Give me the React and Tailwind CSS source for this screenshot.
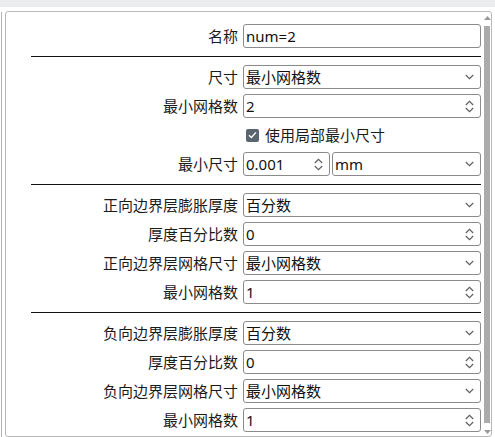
import React from 'react';

const FONT = { fontFamily: '"Segoe UI", "Noto Sans", "Noto Sans CJK SC", sans-serif' };

function Chevron() {
    return (
        <svg width="9" height="6" viewBox="0 0 9 6" className="shrink-0">
            <path d="M0.8 1 L4.5 4.6 L8.2 1" fill="none" stroke="#5f5f5f" strokeWidth="1.2" />
        </svg>
    );
}

function Spin() {
    return (
        <svg width="9" height="13" viewBox="0 0 9 13" className="shrink-0">
            <path d="M0.8 5 L4.5 1.4 L8.2 5" fill="none" stroke="#5f5f5f" strokeWidth="1.2" />
            <path d="M0.8 8 L4.5 11.6 L8.2 8" fill="none" stroke="#5f5f5f" strokeWidth="1.2" />
        </svg>
    );
}

function Field({ value, kind, className = 'flex-1' }) {
    return (
        <div
            className={`${className} h-[24px] border border-[#8b8b8b] rounded-[3px] bg-white flex items-center pl-[2px] pr-[6px] text-[15px] text-[#111] leading-none`}
        >
            <span className="flex-1 whitespace-nowrap">{value}</span>
            {kind === 'select' && <Chevron />}
            {kind === 'spin' && <Spin />}
        </div>
    );
}

function Row({ label, children }) {
    return (
        <div className="flex items-center h-[24px]">
            <div className="w-[237px] shrink-0 pr-[5px] text-right text-[15px] text-[#1b1b1b] leading-none whitespace-nowrap">
                {label}
            </div>
            <div className="flex-1 flex gap-[2px]">{children}</div>
        </div>
    );
}

function Separator() {
    return <div className="ml-[25px] h-px bg-[#111] my-[8px]" />;
}

function Section({ children }) {
    return <div className="flex flex-col gap-[5px]">{children}</div>;
}

export default function App() {
    return (
        <div className="w-[495px] h-[437px] bg-white overflow-hidden" style={FONT}>
            <div className="h-[7px] bg-[#ebecee]" />
            <div className="flex h-[430px] pt-[4px]">
                <div className="w-px ml-px mt-px bg-[#b3b3b3]" />
                <div className="ml-[3px] w-[487px] border border-[#b8b8b8] rounded-[3px] flex overflow-hidden">
                    {/* form content */}
                    <div className="flex-1 pt-[12px] pr-[3px]">
                        <Section>
                            <Row label="名称">
                                <Field value="num=2" />
                            </Row>
                        </Section>
                        <Separator />
                        <Section>
                            <Row label="尺寸">
                                <Field value="最小网格数" kind="select" />
                            </Row>
                            <Row label="最小网格数">
                                <Field value="2" kind="spin" />
                            </Row>
                            <div className="flex items-center h-[24px] pl-[240px] gap-[6px]">
                                <div className="w-[13px] h-[13px] rounded-[2px] bg-[#5b6570] flex items-center justify-center">
                                    <svg width="9" height="8" viewBox="0 0 9 8">
                                        <path d="M1 4.2 L3.4 6.4 L8 1.4" fill="none" stroke="#fff" strokeWidth="1.4" />
                                    </svg>
                                </div>
                                <span className="text-[15px] text-[#1b1b1b] leading-none">使用局部最小尺寸</span>
                            </div>
                            <Row label="最小尺寸">
                                <Field value="0.001" kind="spin" className="w-[87px] shrink-0" />
                                <Field value="mm" kind="select" />
                            </Row>
                        </Section>
                        <Separator />
                        <Section>
                            <Row label="正向边界层膨胀厚度">
                                <Field value="百分数" kind="select" />
                            </Row>
                            <Row label="厚度百分比数">
                                <Field value="0" kind="spin" />
                            </Row>
                            <Row label="正向边界层网格尺寸">
                                <Field value="最小网格数" kind="select" />
                            </Row>
                            <Row label="最小网格数">
                                <Field value="1" kind="spin" />
                            </Row>
                        </Section>
                        <Separator />
                        <Section>
                            <Row label="负向边界层膨胀厚度">
                                <Field value="百分数" kind="select" />
                            </Row>
                            <Row label="厚度百分比数">
                                <Field value="0" kind="spin" />
                            </Row>
                            <Row label="负向边界层网格尺寸">
                                <Field value="最小网格数" kind="select" />
                            </Row>
                            <Row label="最小网格数">
                                <Field value="1" kind="spin" />
                            </Row>
                        </Section>
                    </div>
                    {/* scrollbar */}
                    <div className="w-[6px] mr-px flex flex-col items-center">
                        <svg width="7" height="4" viewBox="0 0 7 4" className="mt-[4px]">
                            <path d="M0 4 L3.5 0 L7 4 Z" fill="#9a9a9a" />
                        </svg>
                        <div className="mt-[6px] w-[6px] h-[397px] bg-[#ababab]" />
                        <svg width="7" height="4" viewBox="0 0 7 4" className="mt-[7px]">
                            <path d="M0 0 L3.5 4 L7 0 Z" fill="#9a9a9a" />
                        </svg>
                    </div>
                </div>
            </div>
        </div>
    );
}
